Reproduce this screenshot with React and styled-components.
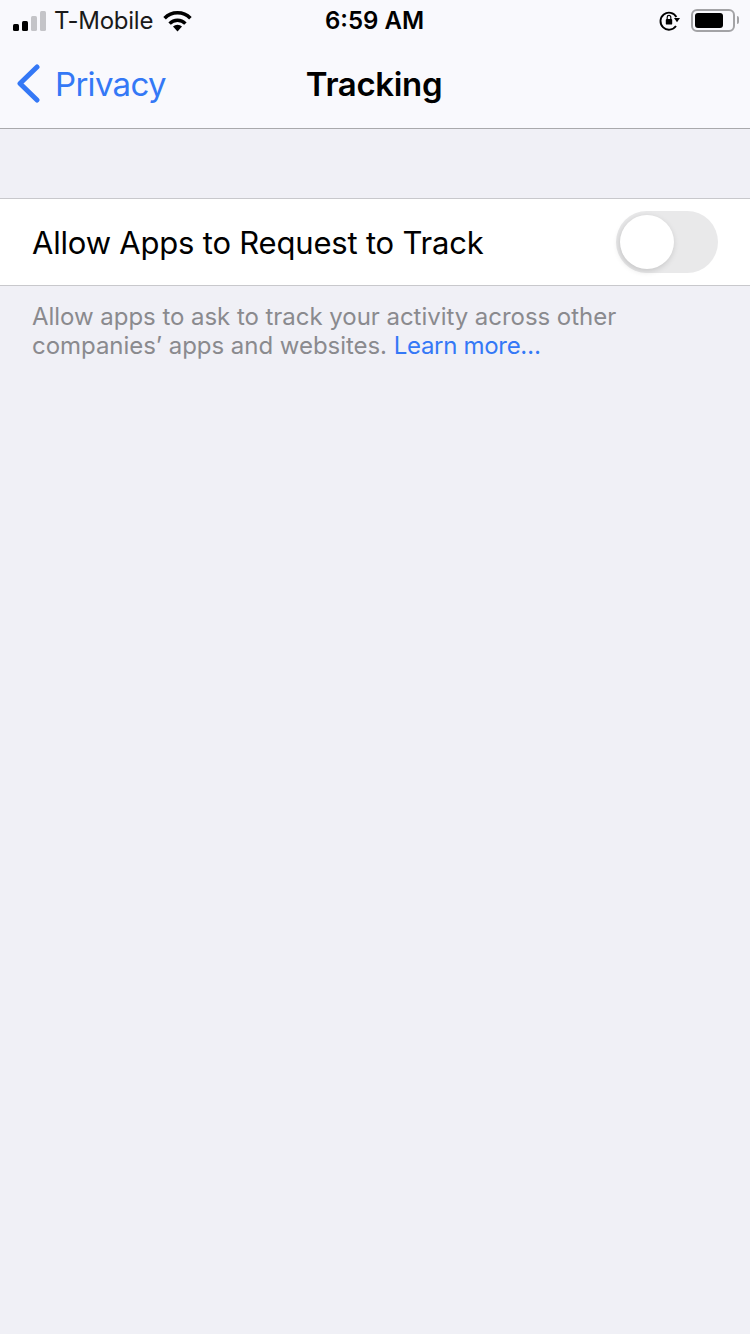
import React from 'react';
import styled, { createGlobalStyle } from 'styled-components';

const GlobalStyle = createGlobalStyle`
	html, body {
		margin: 0;
		padding: 0;
		background: #f0f0f6;
	}
	body {
		font-family: Inter, "Liberation Sans", sans-serif;
	}
`;

const App = () => {
	return (
		<Screen>
			<GlobalStyle />
			<Header>
				<StatusBar>
					<StatusLeft>
						<SignalBars>
							<SignalBar $height={7} $on />
							<SignalBar $height={10} $on />
							<SignalBar $height={15} />
							<SignalBar $height={20} />
						</SignalBars>
						<Carrier>T-Mobile</Carrier>
						<svg width='31' height='23' viewBox='0 0 31 23'>
							<path d='M15.5 22.5 L11 17.6 A6.6 6.6 0 0 1 20 17.6 Z' fill='#000' />
							<path d='M7.6 14.6 A11 11 0 0 1 23.4 14.6' fill='none' stroke='#000' strokeWidth='3.4' />
							<path d='M2.6 9.2 A18 18 0 0 1 28.4 9.2' fill='none' stroke='#000' strokeWidth='3.6' />
						</svg>
					</StatusLeft>
					<Clock>6:59 AM</Clock>
					<StatusRight>
						<svg width='22' height='22' viewBox='0 0 22 22'>
							<path d='M17.4 7 A8.5 8.5 0 1 0 17 16' fill='none' stroke='#000' strokeWidth='1.9' />
							<path d='M15 8 L21 8 L18 12.2 Z' fill='#000' />
							<rect x='6.8' y='9' width='6.4' height='5.6' rx='0.9' fill='#000' />
							<path d='M8.2 9 V7.2 A1.8 1.8 0 0 1 11.8 7.2 V9' fill='none' stroke='#000' strokeWidth='1.2' />
						</svg>
						<Battery>
							<BatteryLevel />
						</Battery>
					</StatusRight>
				</StatusBar>
				<NavBar>
					<BackLink>
						<svg width='26' height='40' viewBox='0 0 26 40'>
							<path d='M21 3 L4 19.5 L21 36' fill='none' stroke='#3478f6' strokeWidth='5' strokeLinecap='round' strokeLinejoin='round' />
						</svg>
						<BackLabel>Privacy</BackLabel>
					</BackLink>
					<NavTitle>Tracking</NavTitle>
				</NavBar>
			</Header>
			<Group>
				<RowLabel>Allow Apps to Request to Track</RowLabel>
				<Switch>
					<Knob />
				</Switch>
			</Group>
			<Footnote>
				Allow apps to ask to track your activity across other
				<br />
				companies’ apps and websites. <FootLink>Learn more…</FootLink>
			</Footnote>
		</Screen>
	);
};

export default App;

const Screen = styled.div`
	width: 750px;
	height: 1334px;
	overflow: hidden;
	background: #f0f0f6;
	display: flex;
	flex-direction: column;
`;

const Header = styled.header`
	height: 128px;
	background: #f9f9fd;
	border-bottom: 1px solid #a9a9ac;
	flex-shrink: 0;
`;

const StatusBar = styled.div`
	height: 40px;
	padding: 1px 11px 0 13px;
	box-sizing: border-box;
	display: grid;
	grid-template-columns: 1fr auto 1fr;
	align-items: center;
`;

const StatusLeft = styled.div`
	display: flex;
	align-items: center;
`;

const SignalBars = styled.div`
	display: flex;
	align-items: flex-end;
	gap: 3px;
	height: 20px;
	margin-right: 8px;
`;

const SignalBar = styled.span`
	width: 6px;
	height: ${(p) => p.$height}px;
	border-radius: 1.5px;
	background: ${(p) => (p.$on ? '#000' : '#c4c4c8')};
`;

const Carrier = styled.span`
	font-size: 24px;
	line-height: 38px;
	letter-spacing: -0.25px;
	color: #1a1a1a;
	margin-right: 9px;
`;

const Clock = styled.span`
	font-size: 24px;
	font-weight: 600;
	line-height: 38px;
	color: #000;
	margin-right: 3px;
`;

const StatusRight = styled.div`
	display: flex;
	align-items: center;
	justify-content: flex-end;
	gap: 10px;
`;

const Battery = styled.div`
	position: relative;
	width: 44px;
	height: 23px;
	box-sizing: border-box;
	border: 2px solid #a3a3a6;
	border-radius: 6px;
	padding: 2px;
	margin-right: 4px;
	&::after {
		content: '';
		position: absolute;
		right: -6px;
		top: 5px;
		width: 2px;
		height: 8px;
		border-radius: 0 2px 2px 0;
		background: #a3a3a6;
	}
`;

const BatteryLevel = styled.div`
	width: 28px;
	height: 100%;
	border-radius: 3px;
	background: #000;
`;

const NavBar = styled.div`
	position: relative;
	height: 88px;
	padding-right: 2px;
	box-sizing: border-box;
	display: flex;
	align-items: center;
	justify-content: center;
`;

const BackLink = styled.div`
	position: absolute;
	left: 16px;
	top: 24px;
	height: 40px;
	display: flex;
	align-items: center;
	gap: 13px;
`;

const BackLabel = styled.span`
	font-size: 33px;
	letter-spacing: -0.7px;
	color: #3478f6;
`;

const NavTitle = styled.h1`
	margin: 0;
	font-size: 33px;
	font-weight: 600;
	letter-spacing: -0.35px;
	color: #000;
`;

const Group = styled.div`
	margin-top: 69px;
	height: 86px;
	background: #fff;
	border-top: 1px solid #c8c8cc;
	border-bottom: 1px solid #c8c8cc;
	padding: 0 32px;
	display: flex;
	align-items: center;
	justify-content: space-between;
	flex-shrink: 0;
`;

const RowLabel = styled.span`
	font-size: 31px;
	letter-spacing: -0.2px;
	color: #000;
`;

const Switch = styled.div`
	width: 102px;
	height: 62px;
	border-radius: 31px;
	background: #e9e9ea;
	box-sizing: border-box;
	padding: 4px;
`;

const Knob = styled.div`
	width: 54px;
	height: 54px;
	border-radius: 50%;
	background: #fff;
	box-shadow: -1px 2px 6px rgba(0, 0, 0, 0.16);
`;

const Footnote = styled.p`
	margin: 16px 0 0;
	padding: 0 32px;
	font-size: 24px;
	line-height: 29px;
	letter-spacing: -0.04px;
	color: #8a8a8e;
`;

const FootLink = styled.span`
	color: #3478f6;
	letter-spacing: -0.3px;
`;
